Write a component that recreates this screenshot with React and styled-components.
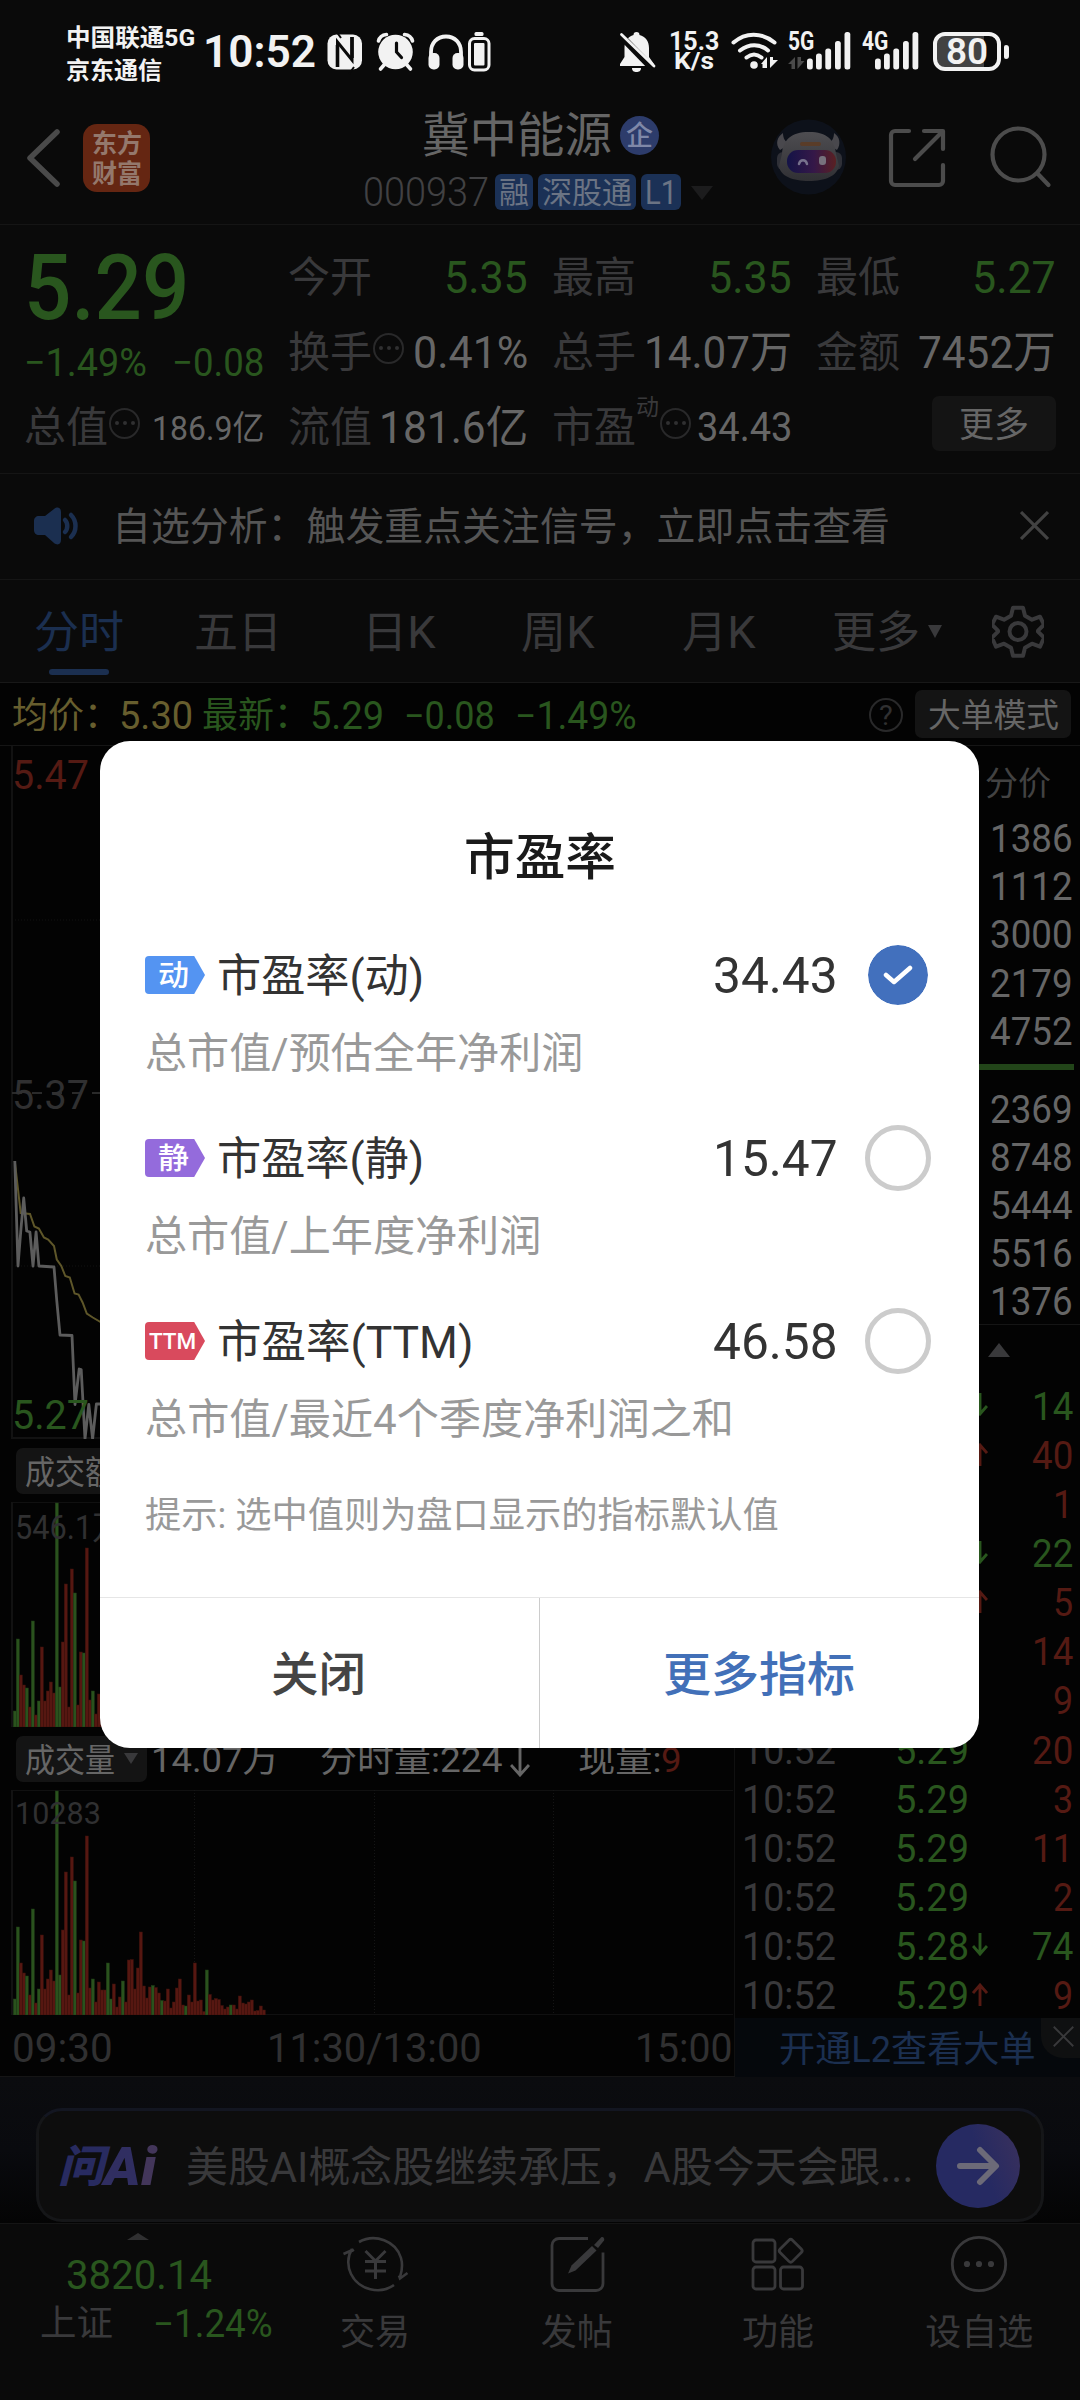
import React, { useLayoutEffect, useRef, useState } from "react";
import styled, { createGlobalStyle } from "styled-components";

const GREEN = "#29561e";
const RED = "#551a13";
const BLUE = "#1b2f50";
const LABEL = "#39393b";
const VALUE = "#666666";
const LINE = "#151515";

const Global = createGlobalStyle`
  * { box-sizing: border-box; }
  body {
    margin: 0;
    background: #0a0a0a;
    font-family: Roboto, "Noto Sans CJK SC", sans-serif;
  }
  svg { display: block; flex: none; }
`;

/* ---------- text that keeps to a given width ---------- */

const TextBox = styled.span`
  display: block;
  flex: none;
  width: ${(p) => p.$width}px;
  margin-left: ${(p) => p.$ml || 0}px;
  line-height: ${(p) => p.$lh || Math.round(p.$size * 1.2)}px;
  font-size: ${(p) => p.$size}px;
  font-weight: ${(p) => p.$weight || 400};
  font-style: ${(p) => (p.$italic ? "italic" : "normal")};
  color: ${(p) => p.$color};
  white-space: nowrap;
`;
const TextRun = styled.span`
  display: inline-block;
  transform-origin: 0 50%;
  white-space: pre;
`;

function Fit({ w, s, c, wt, ml, lh, italic, dy = 2, children }) {
  const ref = useRef(null);
  const [k, setK] = useState(1);
  useLayoutEffect(() => {
    setK(w / ref.current.offsetWidth);
  }, [w, children]);
  return (
    <TextBox $width={w} $size={s} $color={c} $weight={wt} $ml={ml} $lh={lh} $italic={italic}>
      <TextRun ref={ref} style={{ transform: `translateY(${dy}px) scaleX(${k})` }}>
        {children}
      </TextRun>
    </TextBox>
  );
}

/* ---------- page frame ---------- */

const Screen = styled.div`
  position: relative;
  width: 1080px;
  height: 2400px;
  overflow: hidden;
  display: flex;
  flex-direction: column;
  background: #0a0a0a;
`;

const StatusBar = styled.div`
  flex: none;
  height: 103px;
  padding: 0 71px 0 66px;
  display: flex;
  justify-content: space-between;
`;
const StatusSide = styled.div`
  display: flex;
  align-items: center;
`;
const Carrier = styled.div`
  display: flex;
  flex-direction: column;
  gap: 4px;
  margin-top: 5px;
`;
const Speed = styled.div`
  display: flex;
  flex-direction: column;
  align-items: center;
  width: 50px;
  margin: 0 11px 0 12px;
`;

function StatusIconsLeft() {
  return (
    <svg width="178" height="103" viewBox="316 0 178 103" fill="none">
      <rect x="327.500" y="34.500" width="34.500" height="35" rx="9" fill="#f2f2f2" />
      <path d="M337.500 67V42l14.500 18V37" stroke="#0a0a0a" strokeWidth="3" />
      <path d="M337.500 67V45M352 37v21" stroke="#0a0a0a" strokeWidth="3.600" />
      <path d="M336 31l5 7M349 74l5-7" stroke="#0a0a0a" strokeWidth="2" />
      <circle cx="395.500" cy="52" r="17.300" fill="#f2f2f2" />
      <path d="M378.500 41c1-4 4-6 8-6.500M412.500 41c-1-4-4-6-8-6.500M384 65l-3.500 4M407 65l3.500 4" stroke="#f2f2f2" strokeWidth="3.600" strokeLinecap="round" />
      <path d="M396.500 43v9l5 5.500" stroke="#0a0a0a" strokeWidth="3.200" strokeLinecap="round" />
      <path d="M431 60v-8c0-9 6-15.500 15-15.500S461 43 461 52v8" stroke="#f2f2f2" strokeWidth="3.800" />
      <rect x="428.500" y="53" width="11" height="16.500" rx="5" fill="#f2f2f2" />
      <rect x="452.500" y="53" width="11" height="16.500" rx="5" fill="#f2f2f2" />
      <rect x="474.500" y="32" width="9" height="4" rx="1.500" fill="#f2f2f2" />
      <rect x="469.500" y="38.500" width="19.500" height="31.500" rx="5" stroke="#f2f2f2" strokeWidth="3" />
      <rect x="474" y="43" width="10.500" height="22.500" rx="1" fill="#f2f2f2" />
    </svg>
  );
}

function BellOff() {
  return (
    <svg width="40" height="103" viewBox="617 0 40 103">
      <path d="M636.500 32c2 0 3 1 3 3 6 1.500 9.500 6 9.500 13v9l5 7v2h-34v-2l4.500-7v-9c0-7 3.500-11.500 9-13 0-2 1-3 3-3zM632 68h9c0 3-2 4-4.500 4s-4.500-1-4.500-4z" fill="#f2f2f2" />
      <path d="M618 33l36 37" stroke="#0a0a0a" strokeWidth="7" />
      <path d="M621.500 34.500L654 66" stroke="#f2f2f2" strokeWidth="2.800" strokeLinecap="round" />
    </svg>
  );
}

function Wifi() {
  return (
    <svg width="50" height="103" viewBox="730 0 50 103" fill="none" stroke="#f2f2f2" strokeLinecap="round">
      <path d="M733.500 42.500c12-10.500 28-10.500 41 0" strokeWidth="4" />
      <path d="M740 50.500c9-7 20-7 28 0" strokeWidth="4" />
      <path d="M746.500 57.500c5-4 10-4 15 0" strokeWidth="4" />
      <circle cx="754" cy="65" r="3.800" fill="#f2f2f2" stroke="none" />
      <path d="M761 64l6-7v11h-4.500V64zM770 57v11l8-8h-5V57z" fill="#f2f2f2" stroke="none" />
    </svg>
  );
}

const SignalBox = styled.div`
  position: relative;
  width: ${(p) => p.$w}px;
  height: 103px;
  margin-left: ${(p) => p.$ml}px;
`;
const SignalTag = styled.div`
  position: absolute;
  left: 0;
  top: 30px;
`;
function Signal({ name, w, ml, first, data }) {
  const xs = [0, 9, 18.300, 28, 37.500];
  const hs = [11, 16, 21, 28.500, 37.500];
  return (
    <SignalBox $w={w} $ml={ml}>
      <svg width={w} height="103">
        {xs.map((x, i) => (
          <rect key={x} x={first + x} y={69.500 - hs[i]} width="5.800" height={hs[i]} rx="2.500" fill="#f2f2f2" />
        ))}
        {data && <path d="M0 64l7-7v12H3.500v-5zM9.500 57v12l7-8h-3.500v-4z" fill="#4a4a4a" />}
      </svg>
      <SignalTag>
        <Fit w={26} s={25} wt={700} c="#f2f2f2" lh={23} dy={0}>{name}</Fit>
      </SignalTag>
    </SignalBox>
  );
}

const Battery = styled.div`
  width: 68px;
  height: 39px;
  margin: -1px 0 0 14px;
  border: 4px solid #f2f2f2;
  border-radius: 12px;
  display: flex;
  align-items: center;
  justify-content: center;
  background: linear-gradient(90deg, #424242 0 78%, #0a0a0a 78%);
`;
const BatteryNub = styled.div`
  width: 5px;
  height: 14px;
  margin-left: 3px;
  border-radius: 2px 3px 3px 2px;
  background: #f2f2f2;
`;

/* ---------- title bar ---------- */

const TitleBar = styled.div`
  flex: none;
  height: 122px;
  border-bottom: 1px solid ${LINE};
  display: flex;
  padding-left: 24px;
`;
const Logo = styled.div`
  width: 67px;
  height: 68px;
  margin: 21px 0 0 23px;
  border-radius: 14px;
  background: #652612;
  display: flex;
  flex-direction: column;
  align-items: center;
  justify-content: center;
`;
const TitleCenter = styled.div`
  width: 350px;
  margin-left: 213px;
  display: flex;
  flex-direction: column;
`;
const NameRow = styled.div`
  display: flex;
  align-items: center;
  height: 62px;
  padding-left: 59px;
`;
const Verified = styled.div`
  width: 39px;
  height: 39px;
  margin: 2px 0 0 8px;
  border-radius: 50%;
  background: #2d3c6b;
  display: flex;
  align-items: center;
  justify-content: center;
`;
const CodeRow = styled.div`
  display: flex;
  align-items: center;
  height: 53px;
`;
const Tag = styled.div`
  height: 36px;
  padding: 0 4px;
  margin-left: ${(p) => p.$ml}px;
  border-radius: 6px;
  background: #1b3156;
  display: flex;
  align-items: center;
`;
const Caret = styled.div`
  width: 0;
  height: 0;
  margin: ${(p) => p.$m || 0};
  border-left: ${(p) => p.$w}px solid transparent;
  border-right: ${(p) => p.$w}px solid transparent;
  ${(p) => (p.$up ? "border-bottom" : "border-top")}: ${(p) => p.$h}px solid ${(p) => p.$c};
`;

function HeaderIcons() {
  return (
    <svg width="314" height="121" viewBox="766 103 314 121" fill="none">
      <defs>
        <linearGradient id="visor" x1="0" x2="1">
          <stop offset="0" stopColor="#141347" />
          <stop offset=".55" stopColor="#351848" />
          <stop offset="1" stopColor="#5a2022" />
        </linearGradient>
        <linearGradient id="shell" x1="0" y1="0" x2="0" y2="1">
          <stop offset="0" stopColor="#4e4d51" />
          <stop offset="1" stopColor="#303034" />
        </linearGradient>
      </defs>
      <circle cx="808.500" cy="157" r="37.500" fill="#0d111a" />
      <path d="M783 133c-6 4-8 11-3 17l10-6c-5-2-7-6-7-11zM834 133c6 4 7 11 3 17l-10-6c5-2 7-6 7-11z" fill="#49484d" />
      <rect x="777" y="152" width="12" height="18" rx="6" fill="#2f3037" />
      <rect x="830" y="152" width="12" height="18" rx="6" fill="#2f3037" />
      <path d="M782 154c1-14 9-22 27-22s26 8 27 22l3 12c-2 10-14 15-30 15s-29-5-30-15z" fill="url(#shell)" />
      <rect x="800" y="142" width="21" height="4" rx="2" fill="#593c28" />
      <rect x="787" y="150" width="49" height="23" rx="11" fill="url(#visor)" />
      <path d="M799 164c1-5 7-5 8 0" stroke="#77728d" strokeWidth="2.500" strokeLinecap="round" />
      <rect x="819" y="156" width="7" height="9" rx="3" fill="#77727d" />
      <g stroke="#4c4c4c" strokeWidth="4.200" strokeLinecap="round">
        <path d="M909 131h-14a4 4 0 0 0-4 4v46a4 4 0 0 0 4 4h44a4 4 0 0 0 4-4v-16M924 131h19v18M941 133l-26 26" strokeLinejoin="round" />
        <circle cx="1018.500" cy="154.500" r="26" />
        <path d="M1038 174l10.500 11" />
      </g>
    </svg>
  );
}

/* ---------- quote summary ---------- */

const Quote = styled.div`
  flex: none;
  height: 249px;
  padding: 13px 0 0 24px;
  border-bottom: 1px solid ${LINE};
  display: flex;
`;
const PriceColumn = styled.div`
  width: 240px;
  display: flex;
  flex-direction: column;
`;
const PriceLine = styled.div`
  height: ${(p) => p.$h}px;
  display: flex;
  align-items: center;
  justify-content: space-between;
`;
const StatGrid = styled.div`
  margin-left: 24px;
  display: grid;
  grid-template-columns: repeat(3, 240px);
  grid-auto-rows: 75px;
  column-gap: 24px;
`;
const Stat = styled.div`
  display: flex;
  align-items: center;
  justify-content: space-between;
`;
const StatLabel = styled.div`
  display: flex;
  align-items: center;
`;
const Superscript = styled.div`
  margin: -39px 0 0 0;
`;
const MoreButton = styled.div`
  width: 124px;
  height: 55px;
  margin: 0 0 4px auto;
  border-radius: 7px;
  background: #141414;
  display: flex;
  align-items: center;
  justify-content: center;
`;
const Info = styled.div`
  width: 31px;
  height: 31px;
  margin: -5px 0 0 ${(p) => p.$ml || 1}px;
  border: 2px solid #29292a;
  border-radius: 50%;
  display: flex;
  align-items: center;
  justify-content: center;
  gap: 4px;
`;
const Dot = styled.i`
  width: 4px;
  height: 4px;
  border-radius: 50%;
  background: #303031;
`;
const Dots = () => (<><Dot /><Dot /><Dot /></>);

/* ---------- notice, tabs, summary ---------- */

const Notice = styled.div`
  flex: none;
  height: 106px;
  padding: 0 31px 2px 33px;
  border-bottom: 1px solid ${LINE};
  display: flex;
  align-items: center;
`;
const Spacer = styled.div`
  flex: 1;
`;
const Tabs = styled.div`
  flex: none;
  height: 103px;
  padding: 0 36px 0 34px;
  border-bottom: 1px solid #181818;
  display: flex;
`;
const Tab = styled.div`
  height: 102px;
  margin-left: ${(p) => p.$ml || 0}px;
  display: flex;
  flex-direction: column;
  align-items: center;
  justify-content: flex-start;
  padding-top: 25px;
`;
const TabMark = styled.div`
  width: 60px;
  height: 6px;
  margin-top: 11px;
  border-radius: 3px;
  background: ${BLUE};
`;
const Summary = styled.div`
  flex: none;
  height: 63px;
  padding: 0 9px 0 12px;
  border-bottom: 1px solid ${LINE};
  background: #030303;
  display: flex;
  align-items: center;
`;
const Help = styled.div`
  width: 34px;
  height: 34px;
  margin-top: 1px;
  border: 2px solid #29292a;
  border-radius: 50%;
  display: flex;
  align-items: center;
  justify-content: center;
`;
const ModeButton = styled.div`
  width: 156px;
  height: 48px;
  margin-left: 12px;
  border-radius: 7px;
  background: #141414;
  display: flex;
  align-items: center;
  justify-content: center;
`;

/* ---------- market area ---------- */

const Market = styled.div`
  flex: none;
  height: 1331px;
  display: flex;
  background: #030303;
  border-bottom: 1px solid ${LINE};
`;
const Charts = styled.div`
  width: 735px;
  border-right: 1px solid #101010;
  display: flex;
  flex-direction: column;
`;
const Plot = styled.div`
  position: relative;
  flex: none;
  height: ${(p) => p.$h}px;
`;
const PlotLabel = styled.div`
  position: absolute;
  left: ${(p) => p.$x || 12}px;
  top: ${(p) => p.$y}px;
`;
const Strip = styled.div`
  flex: none;
  height: 63px;
  padding-left: 16px;
  display: flex;
  align-items: center;
`;
const Picker = styled.div`
  width: 131px;
  height: 46px;
  padding-left: 9px;
  border-radius: 7px;
  background: #141414;
  display: flex;
  align-items: center;
`;
const TimeAxis = styled.div`
  height: 60px;
  padding: 3px 1px 0 12px;
  display: flex;
  align-items: center;
  justify-content: space-between;
`;

const VOLUMES = [
  [16, 1], [88, 1], [52], [42], [39, 1], [20], [106, 1], [12], [26, 1], [80], [26], [36], [45], [34],
  [224, 1], [40, 1], [85], [143], [20], [158], [134, 1], [22], [75], [74, 1], [179], [27], [36, 1], [13],
  [33], [25], [25], [52, 1], [16, 1], [31], [8], [18], [34, 1], [13], [55], [55.500], [26], [47], [83],
  [29], [17], [28], [29.500, 1], [27.500], [22], [14.500, 1], [14], [26], [7], [13], [27], [36], [10], [9, 1], [20],
  [13], [52], [14], [15], [3.500], [45, 1], [20.500], [15], [16.500], [15.500], [9.500], [6], [8], [10, 1], [10], [6],
  [19], [12], [11], [13], [15], [4], [4.500], [9], [5],
];

function VolumeChart() {
  return (
    <svg width="734" height="225">
      <path d="M12 .5H733M12 224.500H733" stroke="#101010" />
      <path d="M12 0V225" stroke="#121212" strokeWidth="2" />
      <path d="M194.500 0V225M374.500 0V225M553.500 0V225" stroke="#151515" strokeDasharray="1 2" />
      {VOLUMES.map(([h, up], i) => (
        <rect key={i} x={13.300 + i * 3} y={225 - h} width="3" height={h} fill={up ? "#2a521d" : "#561711"} stroke={up ? "#1f3d16" : "#3c100c"} strokeWidth=".5" />
      ))}
    </svg>
  );
}

function PriceChart() {
  return (
    <svg width="734" height="693" viewBox="0 747 734 693" fill="none">
      <path d="M12 747V1440M12 1439H733" stroke="#121212" strokeWidth="2" />
      <path d="M12 921H733M12 1267H733" stroke="#131313" strokeDasharray="1 2" />
      <path d="M12 1094H110" stroke="#2a2a2a" strokeWidth="2" strokeDasharray="10 10" />
      <path d="M14.800 1162L20.700 1214l9.300 1 4.400 12.500 4.500 2 5 9 4.300 2 5.800 6.500 2.800 13.500 4.500 6.500 4 10 4.500 1.500 4.800 16 4 1 4 8 4.200 11 6 4 7.600 4.500 10 9" stroke="#5e5629" strokeWidth="2" />
      <path d="M14.800 1162L18 1267l2.700-34 3-34 3 33 3.200 1 3.100 34 3.100-34 2.800 34 15.100 1 2.800 34 3.200 34 12 .5 3 69 4.200-35.500 2 .5 3.800 69.500 3.800-34.500 3.800 34.500 3.800-35h9" stroke="#5c5c5c" strokeWidth="2.800" strokeLinejoin="round" />
    </svg>
  );
}

const Side = styled.div`
  width: 345px;
  display: flex;
  flex-direction: column;
`;
const SideHead = styled.div`
  flex: none;
  height: 67px;
  padding: 5px 29px 0 0;
  display: flex;
  align-items: center;
  justify-content: flex-end;
`;
const Book = styled.div`
  flex: none;
  padding-right: 7px;
  display: grid;
  grid-auto-rows: 48.200px;
  align-items: center;
  justify-content: end;
`;
const BuySell = styled.div`
  flex: none;
  height: 6px;
  margin: 10px 6px 13.500px 0;
  background: #224519;
`;
const Collapse = styled.div`
  flex: none;
  height: 56px;
  border-top: 1px solid ${LINE};
  padding: 18px 70px 0 0;
  display: flex;
  justify-content: flex-end;
`;
const Ticks = styled.div`
  flex: none;
  height: 638px;
  display: grid;
  grid-auto-rows: 49.100px;
`;
const Tick = styled.div`
  padding: 0 7px 0 7px;
  display: grid;
  grid-template-columns: 153px 77px 18px 1fr;
  align-items: center;
  justify-items: start;
`;
const TickVolume = styled.div`
  justify-self: end;
`;
const Upsell = styled.div`
  flex: none;
  height: 60px;
  padding-left: 44px;
  background: #05080c;
  display: flex;
  align-items: center;
`;
const UpsellClose = styled.div`
  width: 39px;
  height: 40px;
  margin: -20px 0 0 auto;
  padding: 0 0 4px 5px;
  border-radius: 0 0 0 22px;
  background: #0f1011;
  display: flex;
  align-items: center;
  justify-content: center;
`;

function Arrow({ up, c, h = 26, w = 15, sw = 2.900 }) {
  const m = w / 2;
  return (
    <svg width={w} height={h} fill="none" stroke={c} strokeWidth={sw}>
      {up ? (
        <path d={`M${m} ${h}V2M1 ${m + 2}L${m} 2l${m - 1} ${m}`} />
      ) : (
        <path d={`M${m} 0V${h - 2}M1 ${h - m - 2}L${m} ${h - 2}l${m - 1} ${-m}`} />
      )}
    </svg>
  );
}
function Cross({ size, c, sw = 2.500 }) {
  return (
    <svg width={size} height={size} viewBox="0 0 28 28" stroke={c} strokeWidth={sw}>
      <path d="M1 1L27 27M27 1L1 27" />
    </svg>
  );
}

const ASKS = ["1386", "1112", "3000", "2179", "4752"];
const BIDS = ["2369", "8748", "5444", "5516", "1376"];
const TICKS = [
  ["", "", "down", "14", GREEN], ["", "", "up", "40", RED], ["", "", "", "1", RED],
  ["", "", "down", "22", GREEN], ["", "", "up", "5", RED], ["", "", "", "14", RED], ["", "", "", "9", RED],
  ["10:52", "5.29", "", "20", RED], ["10:52", "5.29", "", "3", RED], ["10:52", "5.29", "", "11", RED],
  ["10:52", "5.29", "", "2", RED], ["10:52", "5.28", "down", "74", GREEN], ["10:52", "5.29", "up", "9", RED],
];

/* ---------- assistant bar and bottom navigation ---------- */

const Assistant = styled.div`
  flex: none;
  height: 146px;
  padding: 31px 36px 0;
  background: linear-gradient(#0b0c0f, #090a0e 50%, #040404);
`;
const AskBox = styled.div`
  height: 114px;
  padding: 2px 21px 0 19px;
  border: 3px solid #151618;
  border-top-color: #131621;
  border-radius: 26px;
  background: #0d0d0d;
  display: flex;
  align-items: center;
`;
const AskLogo = styled.div`
  display: flex;
  width: 100px;
`;
const Go = styled.div`
  width: 84px;
  height: 84px;
  margin-left: auto;
  border-radius: 50%;
  background: linear-gradient(70deg, #262a62 55%, #3b315c);
  display: flex;
  align-items: center;
  justify-content: center;
`;
const BottomNav = styled.div`
  flex: none;
  height: 176px;
  border-top: 1px solid ${LINE};
  display: flex;
  padding-left: 37px;
`;
const Index = styled.div`
  width: 238px;
  display: flex;
  flex-direction: column;
`;
const IndexRow = styled.div`
  display: flex;
  align-items: center;
  justify-content: space-between;
  height: 50px;
  padding: 0 2px 0 3px;
`;
const NavItem = styled.div`
  width: 201.500px;
  display: flex;
  flex-direction: column;
  align-items: center;
  padding-top: 10px;
`;

const NAV_ICONS = {
  trade: (
    <svg width="70" height="62" viewBox="340 2234 70 62" fill="none" stroke="#39393b" strokeWidth="2.600">
      <path d="M359 2242c16-9 37-1 42 16 2 7 1 13-1 19M394 2285c-14 10-35 5-43-11-4-8-3.500-18 1-25M343.500 2254l9-4 1 1.500M407.500 2273l-7.500 5.500-1-3" />
      <path d="M365.500 2251l10 10 10-10M365 2261.500h21M365 2271h21M375.500 2261v18" strokeWidth="3" />
    </svg>
  ),
  post: (
    <svg width="70" height="62" viewBox="542 2234 70 62" fill="none" stroke="#39393b" strokeWidth="2.800">
      <path d="M588 2238.500h-29a7 7 0 0 0-7 7v38a7 7 0 0 0 7 7h37a7 7 0 0 0 7-7v-31" />
      <path d="M592 2246l4.500 4.500-21 20-7.500 3 3.500-8z" fill="#39393b" stroke="none" />
      <path d="M594 2245l7-7.500c2-1.500 4 1 3 3l-6 7.500z" fill="#39393b" stroke="none" />
    </svg>
  ),
  grid: (
    <svg width="70" height="62" viewBox="744 2234 70 62" fill="none" stroke="#39393b" strokeWidth="2.800">
      <rect x="754" y="2240" width="22" height="22" rx="3" />
      <rect x="754" y="2267" width="22" height="22" rx="3" />
      <rect x="781.500" y="2267" width="22" height="22" rx="3" />
      <rect x="783" y="2242" width="17.500" height="17.500" rx="2.500" transform="rotate(45 791.700 2250.700)" />
    </svg>
  ),
  more: (
    <svg width="70" height="62" viewBox="944 2234 70 62" fill="#39393b">
      <circle cx="979" cy="2264" r="26.700" fill="none" stroke="#39393b" strokeWidth="2.800" />
      <circle cx="967" cy="2264" r="3.100" /><circle cx="979" cy="2264" r="3.100" /><circle cx="991" cy="2264" r="3.100" />
    </svg>
  ),
};

/* ---------- dialog ---------- */

const Dialog = styled.div`
  position: absolute;
  left: 100px;
  top: 741px;
  width: 879px;
  height: 1007px;
  border-radius: 30px;
  background: #fff;
  overflow: hidden;
  display: flex;
  flex-direction: column;
`;
const DialogTitle = styled.div`
  flex: none;
  height: 188px;
  padding-top: 40px;
  display: flex;
  align-items: center;
  justify-content: center;
`;
const Option = styled.div`
  flex: none;
  height: 183px;
  padding: 0 48px 0 45px;
`;
const OptionRow = styled.div`
  height: 92px;
  display: flex;
  align-items: center;
`;
const OptionTag = styled.div`
  width: 60px;
  height: 38px;
  padding-right: ${(p) => (p.$wide ? 6 : 3)}px;
  border-radius: 4px 0 0 4px;
  background: ${(p) => p.$c};
  clip-path: polygon(0 0, 82% 0, 100% 50%, 82% 100%, 0 100%);
  display: flex;
  align-items: center;
  justify-content: center;
`;
const Radio = styled.div`
  flex: none;
  width: 66px;
  height: 66px;
  margin-left: 27px;
  border: ${(p) => (p.$on ? "3px solid #fff" : "5px solid #ccc")};
  border-radius: 50%;
  background: ${(p) => (p.$on ? "#4270bd" : "#fff")};
  background-clip: padding-box;
  display: flex;
  align-items: center;
  justify-content: center;
`;
const OptionNote = styled.div`
  padding-top: 6px;
`;
const Hint = styled.div`
  flex: 1;
  padding: 15px 0 0 45px;
`;
const Actions = styled.div`
  flex: none;
  height: 151px;
  border-top: 1px solid #e6e6e6;
  display: grid;
  grid-template-columns: 439px 1fr;
`;
const Action = styled.div`
  display: flex;
  align-items: center;
  justify-content: center;
  padding-right: 2px;
  border-left: ${(p) => (p.$divided ? "1px solid #ccc" : "0")};
`;

const OPTIONS = [
  { tag: "动", tw: 31, color: "#5494f2", name: "市盈率(动)", nw: 207, value: "34.43", note: "总市值/预估全年净利润", dw: 438, on: true },
  { tag: "静", tw: 31, color: "#946bdc", name: "市盈率(静)", nw: 207, value: "15.47", note: "总市值/上年度净利润", dw: 396 },
  { tag: "TTM", tw: 47, color: "#d94a5d", name: "市盈率(TTM)", nw: 256, value: "46.58", note: "总市值/最近4个季度净利润之和", dw: 589 },
];

export default function App() {
  const label = (t) => <Fit w={84} s={42} c={LABEL}>{t}</Fit>;
  const value = (t, w, c = VALUE, s = 44.500) => <Fit w={w} s={s} c={c} lh={54}>{t}</Fit>;
  return (
    <Screen>
      <Global />
      <StatusBar>
        <StatusSide>
          <Carrier>
            <Fit w={129} s={24} wt={700} c="#f2f2f2" dy={1}>中国联通5G</Fit>
            <Fit w={96} s={24} wt={700} c="#f2f2f2" dy={1}>京东通信</Fit>
          </Carrier>
          <Fit w={113} s={45} wt={600} c="#f2f2f2" ml={8} dy={0}>10:52</Fit>
          <StatusIconsLeft />
        </StatusSide>
        <StatusSide>
          <BellOff />
          <Speed>
            <Fit w={50} s={26} wt={700} c="#f2f2f2" lh={21} dy={0}>15.3</Fit>
            <Fit w={40} s={23} wt={700} c="#f2f2f2" lh={20} dy={0}>K/s</Fit>
          </Speed>
          <Wifi />
          <Signal name="5G" w={63} ml={8} first={19} data />
          <Signal name="4G" w={57} ml={11} first={13} />
          <Battery>
            <Fit w={42} s={36} wt={600} c="#f2f2f2" lh={32} dy={1}>80</Fit>
          </Battery>
          <BatteryNub />
        </StatusSide>
      </StatusBar>

      <TitleBar>
        <svg width="36" height="121" viewBox="24 103 36 121" fill="none" stroke="#4a4a4a" strokeWidth="5.500">
          <path d="M57 132L30 158l27 26" strokeLinecap="round" strokeLinejoin="round" />
        </svg>
        <Logo>
          <Fit w={50} s={26} wt={700} c="#94786c" lh={30} dy={1}>东方</Fit>
          <Fit w={50} s={26} wt={700} c="#94786c" lh={30} dy={1}>财富</Fit>
        </Logo>
        <TitleCenter>
          <NameRow>
            <Fit w={190} s={48} c={VALUE}>冀中能源</Fit>
            <Verified><Fit w={27} s={27} wt={500} c="#7f88a8" lh={34} dy={1}>企</Fit></Verified>
          </NameRow>
          <CodeRow>
            <Fit w={126} s={40} wt={300} c="#414143" dy={1}>000937</Fit>
            <Tag $ml={6}><Fit w={30} s={30} c="#6b7484" dy={1}>融</Fit></Tag>
            <Tag $ml={5}><Fit w={90} s={30} c="#6b7484" dy={1}>深股通</Fit></Tag>
            <Tag $ml={5}><Fit w={32} s={33} c="#6b7484" dy={1}>L1</Fit></Tag>
            <Caret $w={11} $h={14} $c="#1c1c1d" $m="2px 0 0 10px" />
          </CodeRow>
        </TitleCenter>
        <Spacer />
        <HeaderIcons />
      </TitleBar>

      <Quote>
        <PriceColumn>
          <PriceLine $h={97}><Fit w={165} s={90} wt={500} c={GREEN}>5.29</Fit></PriceLine>
          <PriceLine $h={53}>
            <Fit w={123} s={39} c={GREEN}>−1.49%</Fit>
            <Fit w={92} s={39} c={GREEN}>−0.08</Fit>
          </PriceLine>
          <PriceLine $h={75}>
            <StatLabel>{label("总值")}<Info><Dots /></Info></StatLabel>
            {value("186.9亿", 112, VALUE, 34)}
          </PriceLine>
        </PriceColumn>
        <StatGrid>
          <Stat>{label("今开")}{value("5.35", 84, GREEN)}</Stat>
          <Stat>{label("最高")}{value("5.35", 84, GREEN)}</Stat>
          <Stat>{label("最低")}{value("5.27", 84, GREEN)}</Stat>
          <Stat><StatLabel>{label("换手")}<Info><Dots /></Info></StatLabel>{value("0.41%", 115)}</Stat>
          <Stat>{label("总手")}{value("14.07万", 148)}</Stat>
          <Stat>{label("金额")}{value("7452万", 138)}</Stat>
          <Stat>{label("流值")}{value("181.6亿", 149)}</Stat>
          <Stat>
            <StatLabel>
              {label("市盈")}
              <Superscript><Fit w={23} s={23} c={LABEL}>动</Fit></Superscript>
              <Info><Dots /></Info>
            </StatLabel>
            {value("34.43", 95, VALUE, 40)}
          </Stat>
          <Stat><MoreButton><Fit w={70} s={35} c={VALUE}>更多</Fit></MoreButton></Stat>
        </StatGrid>
      </Quote>

      <Notice>
        <svg width="48" height="38" viewBox="33 508 48 38">
          <path d="M39 517h6l9-7c4-3 7-1 7 3v28c0 4-3 6-7 3l-9-8h-6c-3 0-5-2-5-5v-9c0-3 2-5 5-5z" fill={BLUE} />
          <path d="M65 521c3 3 3 9 0 12M71 516c6 6 6 16 0 22" fill="none" stroke={BLUE} strokeWidth="4.500" strokeLinecap="round" />
        </svg>
        <Fit w={778} s={39} c="#555555" ml={31}>自选分析：触发重点关注信号，立即点击查看</Fit>
        <Spacer />
        <Cross size={29} c="#424242" sw={3} />
      </Notice>

      <Tabs>
        <Tab><Fit w={90} s={44} c={BLUE}>分时</Fit><TabMark /></Tab>
        <Tab $ml={70}><Fit w={88} s={44} c={LABEL}>五日</Fit></Tab>
        <Tab $ml={80}><Fit w={74} s={44} c={LABEL}>日K</Fit></Tab>
        <Tab $ml={85}><Fit w={74} s={44} c={LABEL}>周K</Fit></Tab>
        <Tab $ml={87}><Fit w={74} s={44} c={LABEL}>月K</Fit></Tab>
        <Tab $ml={76}><Fit w={88} s={44} c={LABEL}>更多</Fit></Tab>
        <Caret $w={7.5} $h={13} $c={LABEL} $m="45px 0 0 8px" />
        <Spacer />
        <svg width="52" height="102" viewBox="992 580 52 102" fill="none" stroke="#39393b" strokeWidth="4">
          <path d="M1013 608h10l2 8 7 4 8-3 4 8-6 6 0 1 6 6-4 9-8-3-7 4-2 8h-10l-2-8-7-4-8 3-4-9 6-6 0-1-6-6 4-8 8 3 7-4z" transform="translate(0 -.3)" strokeLinejoin="round" />
          <circle cx="1018" cy="631.500" r="8.500" />
        </svg>
      </Tabs>

      <Summary>
        <Fit w={108} s={36} c="#675e2e">均价：</Fit>
        <Fit w={74} s={38} c="#675e2e" ml={-1}>5.30</Fit>
        <Fit w={108} s={36} c={GREEN} ml={9}>最新：</Fit>
        <Fit w={74} s={38} c={GREEN} ml={0}>5.29</Fit>
        <Fit w={91} s={38} c={GREEN} ml={20}>−0.08</Fit>
        <Fit w={122} s={38} c={GREEN} ml={20}>−1.49%</Fit>
        <Spacer />
        <Help><Fit w={14} s={27} c="#303031" lh={28} dy={1}>?</Fit></Help>
        <ModeButton><Fit w={131} s={33} c={VALUE}>大单模式</Fit></ModeButton>
      </Summary>

      <Market>
        <Charts>
          <Plot $h={693}>
            <PriceChart />
            <PlotLabel $y={3}><Fit w={77} s={41} c={RED}>5.47</Fit></PlotLabel>
            <PlotLabel $y={323}><Fit w={77} s={41} c="#303031">5.37</Fit></PlotLabel>
            <PlotLabel $y={643}><Fit w={77} s={41} c={GREEN}>5.27</Fit></PlotLabel>
          </Plot>
          <Strip><Picker><Fit w={90} s={33} c={VALUE}>成交额</Fit></Picker></Strip>
          <Plot $h={225}>
            <VolumeChart />
            <PlotLabel $x={15} $y={4}><Fit w={108} s={33} c="#303031">546.1万</Fit></PlotLabel>
          </Plot>
          <Strip>
            <Picker>
              <Fit w={90} s={33} c={VALUE}>成交量</Fit>
              <Caret $w={7} $h={11} $c="#39393b" $m="0 0 0 9px" />
            </Picker>
            <Fit w={128} s={35} c={VALUE} ml={4}>14.07万</Fit>
            <Fit w={183} s={35} c={VALUE} ml={41}>分时量:224</Fit>
            <Spacer />
          </Strip>
          <Plot $h={225}>
            <VolumeChart />
            <PlotLabel $x={15} $y={2}><Fit w={86} s={32} c="#303031">10283</Fit></PlotLabel>
            <PlotLabel $x={510} $y={-51}><Arrow c={VALUE} w={20} h={38} /></PlotLabel>
            <PlotLabel $x={578} $y={-52}><Fit w={83} s={35} c={VALUE}>现量:</Fit></PlotLabel>
            <PlotLabel $x={661} $y={-52}><Fit w={21} s={35} c={RED}>9</Fit></PlotLabel>
          </Plot>
          <TimeAxis>
            <Fit w={101} s={40} c="#303031">09:30</Fit>
            <Fit w={215} s={40} c="#303031">11:30/13:00</Fit>
            <Fit w={98} s={40} c="#303031">15:00</Fit>
          </TimeAxis>
        </Charts>
        <Side>
          <SideHead><Fit w={66} s={33} c="#424242">分价</Fit></SideHead>
          <Book>{ASKS.map((v) => <Fit key={v} w={83} s={38.500} c={VALUE}>{v}</Fit>)}</Book>
          <BuySell />
          <Book>{BIDS.map((v) => <Fit key={v} w={83} s={38.500} c={VALUE}>{v}</Fit>)}</Book>
          <Collapse><Caret $up $w={11} $h={14} $c="#39393b" /></Collapse>
          <Ticks>
            {TICKS.map(([time, price, dir, vol, color], i) => (
              <Tick key={i}>
                {time ? <Fit w={94} s={38.500} c="#39393b">{time}</Fit> : <i />}
                {price ? <Fit w={74} s={38.500} c={GREEN}>{price}</Fit> : <i />}
                {dir ? <Arrow up={dir === "up"} c={dir === "up" ? RED : GREEN} h={23} w={16} /> : <i />}
                <TickVolume><Fit w={vol.length * 20.500} s={38.500} c={color}>{vol}</Fit></TickVolume>
              </Tick>
            ))}
          </Ticks>
          <Upsell>
            <Fit w={257} s={36} c={BLUE}>开通L2查看大单</Fit>
            <UpsellClose><Cross size={21} c="#39393b" /></UpsellClose>
          </Upsell>
        </Side>
      </Market>

      <Assistant>
        <AskBox>
          <AskLogo>
            <Fit w={46} s={44} wt={900} c="#282b60" italic dy={1}>问</Fit>
            <Fit w={37} s={54} wt={900} c="#302e61" italic lh={53} dy={0}>A</Fit>
            <Fit w={15} s={54} wt={900} c="#43365a" italic lh={53} dy={0}>i</Fit>
          </AskLogo>
          <Fit w={727} s={42} c="#39393b" ml={28}>美股AI概念股继续承压，A股今天会跟...</Fit>
          <Go>
            <svg width="44" height="40" fill="none" stroke="#6c6a78" strokeWidth="6" strokeLinecap="round" strokeLinejoin="round">
              <path d="M4 20h34M24 4l16 16-16 16" />
            </svg>
          </Go>
        </AskBox>
      </Assistant>

      <BottomNav>
        <Index>
          <Caret $up $w={11} $h={7} $c="#303031" $m="9px 0 8px 90px" />
          <Fit w={146} s={41} c={GREEN} ml={29} dy={3}>3820.14</Fit>
          <IndexRow>
            <Fit w={73} s={36} c={LABEL}>上证</Fit>
            <Fit w={120} s={38} c={GREEN}>−1.24%</Fit>
          </IndexRow>
        </Index>
        {[["trade", "交易", 70], ["post", "发帖", 72], ["grid", "功能", 72], ["more", "设自选", 108]].map(([icon, name, w]) => (
          <NavItem key={icon}>
            {NAV_ICONS[icon]}
            <Fit w={w} s={36} c={LABEL} lh={70}>{name}</Fit>
          </NavItem>
        ))}
      </BottomNav>

      <Dialog>
        <DialogTitle><Fit w={152} s={50} wt={500} c="#1a1a1a" dy={3}>市盈率</Fit></DialogTitle>
        {OPTIONS.map((o) => (
          <Option key={o.name}>
            <OptionRow>
              <OptionTag $c={o.color} $wide={o.tw > 40}>
                <Fit w={o.tw} s={o.tw > 40 ? 22 : 29} wt={500} c="#fff" lh={36} dy={1}>{o.tag}</Fit>
              </OptionTag>
              <Fit w={o.nw} s={45} c="#333" ml={12}>{o.name}</Fit>
              <Spacer />
              <Fit w={125} s={50} c="#333" dy={1}>{o.value}</Fit>
              <Radio $on={o.on}>
                {o.on && (
                  <svg width="30" height="22" fill="none" stroke="#fff" strokeWidth="4.500" strokeLinecap="round" strokeLinejoin="round">
                    <path d="M3 11l8 7L27 4" />
                  </svg>
                )}
              </Radio>
            </OptionRow>
            <OptionNote><Fit w={o.dw} s={42} c="#999">{o.note}</Fit></OptionNote>
          </Option>
        ))}
        <Hint><Fit w={634} s={36} c="#999">提示: 选中值则为盘口显示的指标默认值</Fit></Hint>
        <Actions>
          <Action><Fit w={95} s={47} wt={500} c="#444">关闭</Fit></Action>
          <Action $divided><Fit w={192} s={47} wt={500} c="#4270b8">更多指标</Fit></Action>
        </Actions>
      </Dialog>
    </Screen>
  );
}
